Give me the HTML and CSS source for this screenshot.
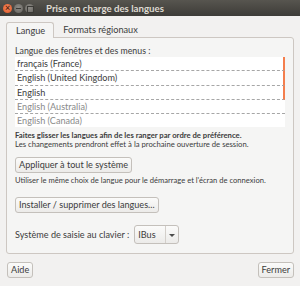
FILE: index.html
```html
<!DOCTYPE html>
<html>
	<head>
		<meta charset="utf-8">
		<title>Prise en charge des langues</title>
		<link rel="stylesheet" href="styles.css">
	</head>
	<body>
		<div class="titlebar">
			<span class="wbtn close"></span>
			<span class="wbtn mini"></span>
			<span class="wbtn maxi"></span>
			<span class="title">Prise en charge des langues</span>
		</div>
		<div class="content">
			<div class="tabs">
				<div class="tab active">Langue</div>
				<div class="tab">Formats régionaux</div>
			</div>
			<div class="panel">
				<div class="label">Langue des fenêtres et des menus :</div>
				<ul class="langs">
					<li class="on">français (France)</li>
					<li class="on">English (United Kingdom)</li>
					<li class="on">English</li>
					<li class="off">English (Australia)</li>
					<li class="off">English (Canada)</li>
				</ul>
				<div class="hint">
					<b>Faites glisser les langues afin de les ranger par ordre de préférence.</b>
					<span>Les changements prendront effet à la prochaine ouverture de session.</span>
				</div>
				<div class="row apply"><button class="btn">Appliquer à tout le système</button></div>
				<div class="note">Utiliser le même choix de langue pour le démarrage et l'écran de connexion.</div>
				<div class="row install"><button class="btn">Installer / supprimer des langues...</button></div>
				<div class="row input">
					<span>Système de saisie au clavier :</span>
					<div class="combo"><span class="val">IBus</span><span class="arrow"></span></div>
				</div>
			</div>
			<div class="footer">
				<button class="btn">Aide</button>
				<button class="btn">Fermer</button>
			</div>
		</div>
	</body>
</html>
```
FILE: styles.css
```css
*{
	margin: 0;
	padding: 0;
	box-sizing: border-box;
}
body{
	width: 300px;
	height: 286px;
	overflow: hidden;
	background: #f2f1f0;
	font-family: Lato, "Liberation Sans", sans-serif;
	font-size: 9.1px;
	color: #3c3c3c;
}
.titlebar{
	height: 16px;
	background: linear-gradient(#57554f, #3d3c38);
	display: flex;
	align-items: center;
	padding-left: 3px;
}
.wbtn{
	width: 9px;
	height: 9px;
	border-radius: 50%;
	margin-right: 2px;
	background: radial-gradient(circle at 50% 40%, #8d8b86, #64625d);
	position: relative;
}
.wbtn.close{
	background: radial-gradient(circle at 50% 40%, #f68a5e, #dd5526);
}
.wbtn.close:after{
	content: "×";
	position: absolute;
	left: 2px;
	top: -2px;
	font-size: 9px;
	font-weight: bold;
	color: #5a2410;
}
.wbtn.mini:after{
	content: "";
	position: absolute;
	left: 2px;
	top: 4px;
	width: 5px;
	height: 1px;
	background: #3b3a36;
}
.wbtn.maxi:after{
	content: "";
	position: absolute;
	left: 2px;
	top: 2px;
	width: 5px;
	height: 5px;
	border: 1px solid #3b3a36;
}
.title{
	margin-left: 10px;
	font-weight: bold;
	font-size: 9.7px;
	color: #dfdbd2;
}
.content{
	padding: 6px 6px 0 6px;
}
.tabs{
	display: flex;
	height: 15px;
}
.tab{
	height: 16px;
	padding: 0 8px 0 9px;
	line-height: 15px;
	font-size: 9.2px;
}
.tab.active{
	border: 1px solid #cdc7c2;
	border-bottom: none;
	border-radius: 3px 3px 0 0;
	background: #f5f5f4;
	position: relative;
	z-index: 1;
}
.panel{
	border: 1px solid #cdc7c2;
	border-radius: 0 3px 3px 3px;
	background: #f5f5f4;
	height: 217px;
	padding: 7px 8px 0 8px;
}
.label{
	height: 12px;
	line-height: 12px;
	font-size: 8.8px;
}
.langs{
	list-style: none;
	height: 70px;
	overflow: hidden;
	background: #fff;
	width: 270px;
}
.langs li{
	height: 14.25px;
	line-height: 14px;
	padding-left: 2px;
	border-bottom: 1px dashed #a6a6a6;
}
.langs li.on{
	border-right: 2px solid #f47e4d;
}
.langs li.off{
	color: #8a8a8a;
}
.hint{
	margin-top: 4px;
	font-size: 7.7px;
	line-height: 9px;
}
.hint b,
.hint span{
	display: block;
	white-space: nowrap;
}
.row{
	display: flex;
	align-items: center;
}
.btn{
	font-family: inherit;
	font-size: 9.1px;
	color: #3c3c3c;
	height: 16px;
	padding: 0 3px;
	border: 1px solid #c4c0bb;
	border-radius: 3px;
	background: linear-gradient(#fbfbfa, #ecebe9);
	line-height: 14px;
}
.apply{
	margin-top: 8px;
}
.note{
	margin-top: 2px;
	font-size: 7.6px;
	line-height: 10px;
	white-space: nowrap;
}
.install{
	margin-top: 12px;
}
.input{
	margin-top: 12px;
	gap: 5px;
}
.combo{
	display: flex;
	align-items: center;
	height: 19px;
	width: 45px;
	border: 1px solid #c4c0bb;
	border-radius: 3px;
	background: linear-gradient(#fbfbfa, #ecebe9);
}
.combo .val{
	width: 31px;
	padding-left: 3px;
	border-right: 1px solid #d3cfca;
	line-height: 17px;
}
.combo .arrow{
	flex: 1;
	height: 10px;
	position: relative;
}
.combo .arrow:after{
	content: "";
	position: absolute;
	left: 3px;
	top: 4px;
	border-left: 3px solid transparent;
	border-right: 3px solid transparent;
	border-top: 3px solid #4c4c4c;
}
.footer{
	display: flex;
	justify-content: space-between;
	padding: 8px 0 0 1px;
}
.footer .btn{
	height: 16px;
}
```
